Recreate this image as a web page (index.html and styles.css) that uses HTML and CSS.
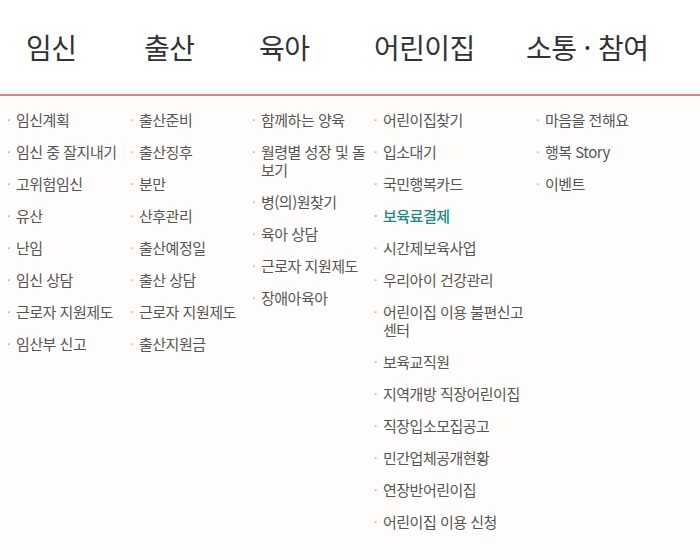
FILE: index.html
```html
<!DOCTYPE html>
<html lang="ko">
<head>
<meta charset="utf-8">
<title>메뉴</title>
<link rel="stylesheet" href="styles.css">
</head>
<body>
<header class="gnb">
  <h2 class="gnb-title">임신</h2>
  <h2 class="gnb-title">출산</h2>
  <h2 class="gnb-title">육아</h2>
  <h2 class="gnb-title">어린이집</h2>
  <h2 class="gnb-title">소통 · 참여</h2>
</header>
<main class="menu">
  <ul class="col col-1">
    <li>임신계획</li>
    <li>임신 중 잘지내기</li>
    <li>고위험임신</li>
    <li>유산</li>
    <li>난임</li>
    <li>임신 상담</li>
    <li>근로자 지원제도</li>
    <li>임산부 신고</li>
  </ul>
  <ul class="col col-2">
    <li>출산준비</li>
    <li>출산징후</li>
    <li>분만</li>
    <li>산후관리</li>
    <li>출산예정일</li>
    <li>출산 상담</li>
    <li>근로자 지원제도</li>
    <li>출산지원금</li>
  </ul>
  <ul class="col col-3">
    <li>함께하는 양육</li>
    <li>월령별 성장 및 돌보기</li>
    <li>병(의)원찾기</li>
    <li>육아 상담</li>
    <li>근로자 지원제도</li>
    <li>장애아육아</li>
  </ul>
  <ul class="col col-4">
    <li>어린이집찾기</li>
    <li>입소대기</li>
    <li>국민행복카드</li>
    <li class="active">보육료결제</li>
    <li>시간제보육사업</li>
    <li>우리아이 건강관리</li>
    <li>어린이집 이용 불편신고 센터</li>
    <li>보육교직원</li>
    <li>지역개방 직장어린이집</li>
    <li>직장입소모집공고</li>
    <li>민간업체공개현황</li>
    <li>연장반어린이집</li>
    <li>어린이집 이용 신청</li>
  </ul>
  <ul class="col col-5">
    <li>마음을 전해요</li>
    <li>행복 Story</li>
    <li>이벤트</li>
  </ul>
</main>
</body>
</html>
```

FILE: styles.css
```css
html, body {
  margin: 0;
  padding: 0;
  background: #ffffff;
}
body {
  font-family: "Noto Sans CJK KR", "Noto Sans", sans-serif;
  color: #444;
}
.gnb {
  display: grid;
  grid-template-columns: 118px 115px 115px 152px auto;
  align-items: center;
  height: 94px;
  padding-left: 26px;
  border-bottom: 2px solid #d9877a;
  box-shadow: 0 1px 0 #f2c9c1;
  background: #fff;
}
.gnb-title {
  margin: 0;
  font-size: 28px;
  font-weight: 400;
  letter-spacing: -0.6px;
  color: #333;
  line-height: 1;
  white-space: nowrap;
}
.menu {
  display: grid;
  grid-template-columns: 123px 122px 122px 162px 1fr;
  padding: 15px 0 0 7px;
  background: #fffdfc;
  min-height: 460px;
}
.col {
  list-style: none;
  margin: 0;
  padding: 0;
  display: flex;
  flex-direction: column;
  gap: 14px;
}
.col li {
  display: flex;
  font-size: 15px;
  line-height: 18px;
  color: #555;
  letter-spacing: -0.5px;
}
.col li::before {
  content: "·";
  flex: none;
  width: 9px;
  color: #aaa;
  font-size: 12px;
}
.col-3 li { max-width: 122px; }
.col-4 li { max-width: 162px; }
.col li.active {
  color: #1b8a86;
  font-weight: 500;
}
```
